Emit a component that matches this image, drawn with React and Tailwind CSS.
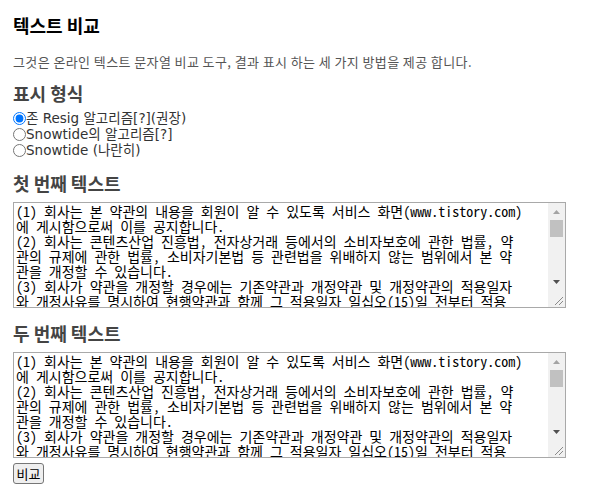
import React from 'react';

const TERMS = [
    '(1) 회사는 본 약관의 내용을 회원이 알 수 있도록 서비스 화면(www.tistory.com)',
    '에 게시함으로써 이를 공지합니다.',
    '(2) 회사는 콘텐츠산업 진흥법, 전자상거래 등에서의 소비자보호에 관한 법률, 약',
    '관의 규제에 관한 법률, 소비자기본법 등 관련법을 위배하지 않는 범위에서 본 약',
    '관을 개정할 수 있습니다.',
    '(3) 회사가 약관을 개정할 경우에는 기존약관과 개정약관 및 개정약관의 적용일자',
    '와 개정사유를 명시하여 현행약관과 함께 그 적용일자 일십오(15)일 전부터 적용',
    '일 전일까지 홈페이지에 공지합니다. 단, 회원에게 불리한 내용으로 변경하는 경',
    '우에는 적용일자 삼십(30)일 전부터 공지하며, 회원이 등록한 이메일 등으로 개별',
    '통지합니다.',
    '(4) 회사가 전항에 따라 회원에게 통지하면서 공지일로부터 적용일자 7일 후까지',
    '거부의사를 표시하지 아니하면 승인한 것으로 본다는 뜻을 명확하게 고지하였음에',
    '도 불구하고 거부의 의사표시가 없는 경우에는 변경된 약관을 승인한 것으로 봅니',
    '다. 회원이 개정약관에 동의하지 않을 경우 회원은 이용계약을 해지할 수 있습니',
    '다.',
    '(5) 이 약관에서 정하지 아니한 사항과 이 약관의 해석에 관하여는 관련 법령 또',
    '는 상관례에 따릅니다.',
    '(6) 회사는 필요한 경우 특정 서비스에 관하여 적용될 사항(이하 "개별약관")을',
    '정하여 미리 공지할 수 있습니다. 회원이 이러한 개별약관에 동의하고 특정 서비',
    '스를 이용하는 경우에는 개별약관이 우선적으로 적용되고, 이 약관은 보충적인 효',
    '력을 갖습니다.',
    '(7) 본 약관에 명시되지 않은 사항은 관계법령 및 회사가 정한 서비스의 세부이용',
    '지침 등의 규정에 따릅니다.',
    '(8) 회원은 언제든지 회사에 이용계약 해지 신청을 할 수 있으며, 회사는 관련 법',
    '령이 정하는 바에 따라 이를 즉시 처리하여야 합니다.',
].join('\n');

const heading = "font-['Noto_Sans_CJK_KR',sans-serif] font-bold text-[18px] leading-[24px]";

// classic scrollbar drawn next to the textarea (headless uses overlay bars)
function ScrollBar() {
    return (
        <div className="flex flex-col w-[17px] bg-[#f1f1f1]">
            <div className="h-[17px] flex items-center justify-center">
                <svg width="7" height="4" viewBox="0 0 7 4"><path d="M3.5 0L7 4H0z" fill="#a3a3a3" /></svg>
            </div>
            <div className="flex-1 px-[2px]">
                <div className="h-[17px] bg-[#c1c1c1]" />
            </div>
            <div className="h-[17px] flex items-center justify-center">
                <svg width="7" height="4" viewBox="0 0 7 4"><path d="M0 0H7L3.5 4z" fill="#505050" /></svg>
            </div>
            <div className="h-[17px] flex items-end justify-end p-[2px] bg-[#f1f1f1]">
                <svg width="9" height="9" viewBox="0 0 9 9">
                    <path d="M1 9L9 1M5 9L9 5" stroke="#8a8a8a" strokeWidth="1" />
                </svg>
            </div>
        </div>
    );
}

function TextBox() {
    return (
        <div className="flex w-[553px] h-[106px] border border-[#a9a9a9] bg-white">
            <textarea
                defaultValue={TERMS}
                spellCheck={false}
                className="flex-1 min-w-0 h-full resize-none px-[2px] py-[1px] text-black text-[14px] leading-[15px] font-['Noto_Sans_Mono_CJK_KR','Noto_Sans_CJK_KR',monospace] whitespace-pre overflow-hidden outline-none"
            />
            <ScrollBar />
        </div>
    );
}

function Option({ label, checked }) {
    return (
        <label className="flex items-center h-[16px]">
            <input type="radio" name="mode" defaultChecked={checked} className="m-0 w-[13px] h-[13px] accent-[#0075ff]" />
            <span>{label}</span>
        </label>
    );
}

export default function App() {
    return (
        <div className="min-h-screen bg-white px-[13px] pt-[13px] font-['Noto_Sans_CJK_KR',sans-serif] text-[13px] text-[#333]">
            <h1 className={`${heading} text-black`}>텍스트 비교</h1>
            <p className="mt-[17px] text-[13px] leading-[16px] tracking-[0.4px] text-[#555]">
                그것은 온라인 텍스트 문자열 비교 도구, 결과 표시 하는 세 가지 방법을 제공 합니다.
            </p>

            <h2 className={`${heading} mt-[11px] text-[#444]`}>표시 형식</h2>
            <div className="mt-[5px] text-[13.5px] leading-[16px] font-['DejaVu_Sans','Noto_Sans_CJK_KR',sans-serif]">
                <Option label="존 Resig 알고리즘[?](권장)" checked />
                <Option label="Snowtide의 알고리즘[?]" />
                <Option label="Snowtide (나란히)" />
            </div>

            <h2 className={`${heading} mt-[13px] text-[#444]`}>첫 번째 텍스트</h2>
            <div className="mt-[7px]">
                <TextBox />
            </div>

            <h2 className={`${heading} mt-[13px] text-[#444]`}>두 번째 텍스트</h2>
            <div className="mt-[7px]">
                <TextBox />
            </div>

            <button className="mt-[5px] w-[31px] h-[21px] px-0 border border-[#767676] rounded-[3px] bg-[#efefef] text-black text-[13px] leading-[15px]">
                비교
            </button>
        </div>
    );
}
